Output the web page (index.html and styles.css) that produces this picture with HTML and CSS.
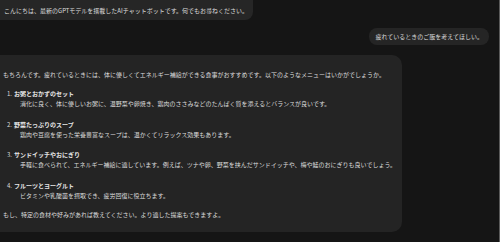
FILE: index.html
```html
<!DOCTYPE html>
<html lang="ja">
<head>
    <meta charset="UTF-8">
    <meta name="viewport" content="width=device-width, initial-scale=1.0">
    <title>AIチャット</title>
    <link rel="stylesheet" href="styles.css">
</head>
<body>
    <div class="chat">
        <div class="msg bot greeting">こんにちは、最新のGPTモデルを搭載したAIチャットボットです。何でもお尋ねください。</div>

        <div class="msg user">疲れているときのご飯を考えてほしい。</div>

        <div class="msg bot answer">
            <p>もちろんです。疲れているときには、体に優しくてエネルギー補給ができる食事がおすすめです。以下のようなメニューはいかがでしょうか。</p>
            <ol class="menu">
                <li>
                    <div class="title"><span class="num">1.</span><b>お粥とおかずのセット</b></div>
                    <div class="desc">消化に良く、体に優しいお粥に、温野菜や卵焼き、鶏肉のささみなどのたんぱく質を添えるとバランスが良いです。</div>
                </li>
                <li>
                    <div class="title"><span class="num">2.</span><b>野菜たっぷりのスープ</b></div>
                    <div class="desc">鶏肉や豆腐を使った栄養豊富なスープは、温かくてリラックス効果もあります。</div>
                </li>
                <li>
                    <div class="title"><span class="num">3.</span><b>サンドイッチやおにぎり</b></div>
                    <div class="desc">手軽に食べられて、エネルギー補給に適しています。例えば、ツナや卵、野菜を挟んだサンドイッチや、梅や鮭のおにぎりも良いでしょう。</div>
                </li>
                <li>
                    <div class="title"><span class="num">4.</span><b>フルーツとヨーグルト</b></div>
                    <div class="desc">ビタミンや乳酸菌を摂取でき、疲労回復に役立ちます。</div>
                </li>
            </ol>
            <p>もし、特定の食材や好みがあれば教えてください。より適した提案もできますよ。</p>
        </div>
    </div>
</body>
</html>
```

FILE: styles.css
```css
html, body {
    margin: 0;
    height: 100%;
}
body {
    background: #151515;
    color: #dcdcdc;
    font-family: "Noto Sans CJK JP", "Noto Sans", sans-serif;
    font-size: 6px;
    line-height: 10px;
    overflow: hidden;
}
.chat {
    display: flex;
    flex-direction: column;
    height: 242px;
    border-right: 1px solid #5a5a5a;
}
.msg {
    background: #242424;
    box-sizing: border-box;
}
.greeting {
    width: 253px;
    height: 20px;
    padding: 6px 0 0 4px;
    border-radius: 0 0 8px 0;
    background: #262626;
}
.user {
    align-self: flex-end;
    margin: 8px 10px 0 0;
    height: 17px;
    padding: 4px 6px 0 6px;
    border-radius: 8px;
    background: #252525;
}
.answer {
    width: 402px;
    margin-top: 10px;
    padding: 15px 4px 12px 3px;
    border-radius: 0 10px 10px 0;
}
.answer p {
    margin: 0;
}
.menu {
    list-style: none;
    margin: 9px 0;
    padding: 0 0 0 4px;
    display: flex;
    flex-direction: column;
    gap: 10.5px;
}
.title b {
    font-weight: bold;
    color: #e6e6e6;
}
.num {
    display: inline-block;
    width: 7px;
}
.desc {
    padding-left: 13px;
}
```
